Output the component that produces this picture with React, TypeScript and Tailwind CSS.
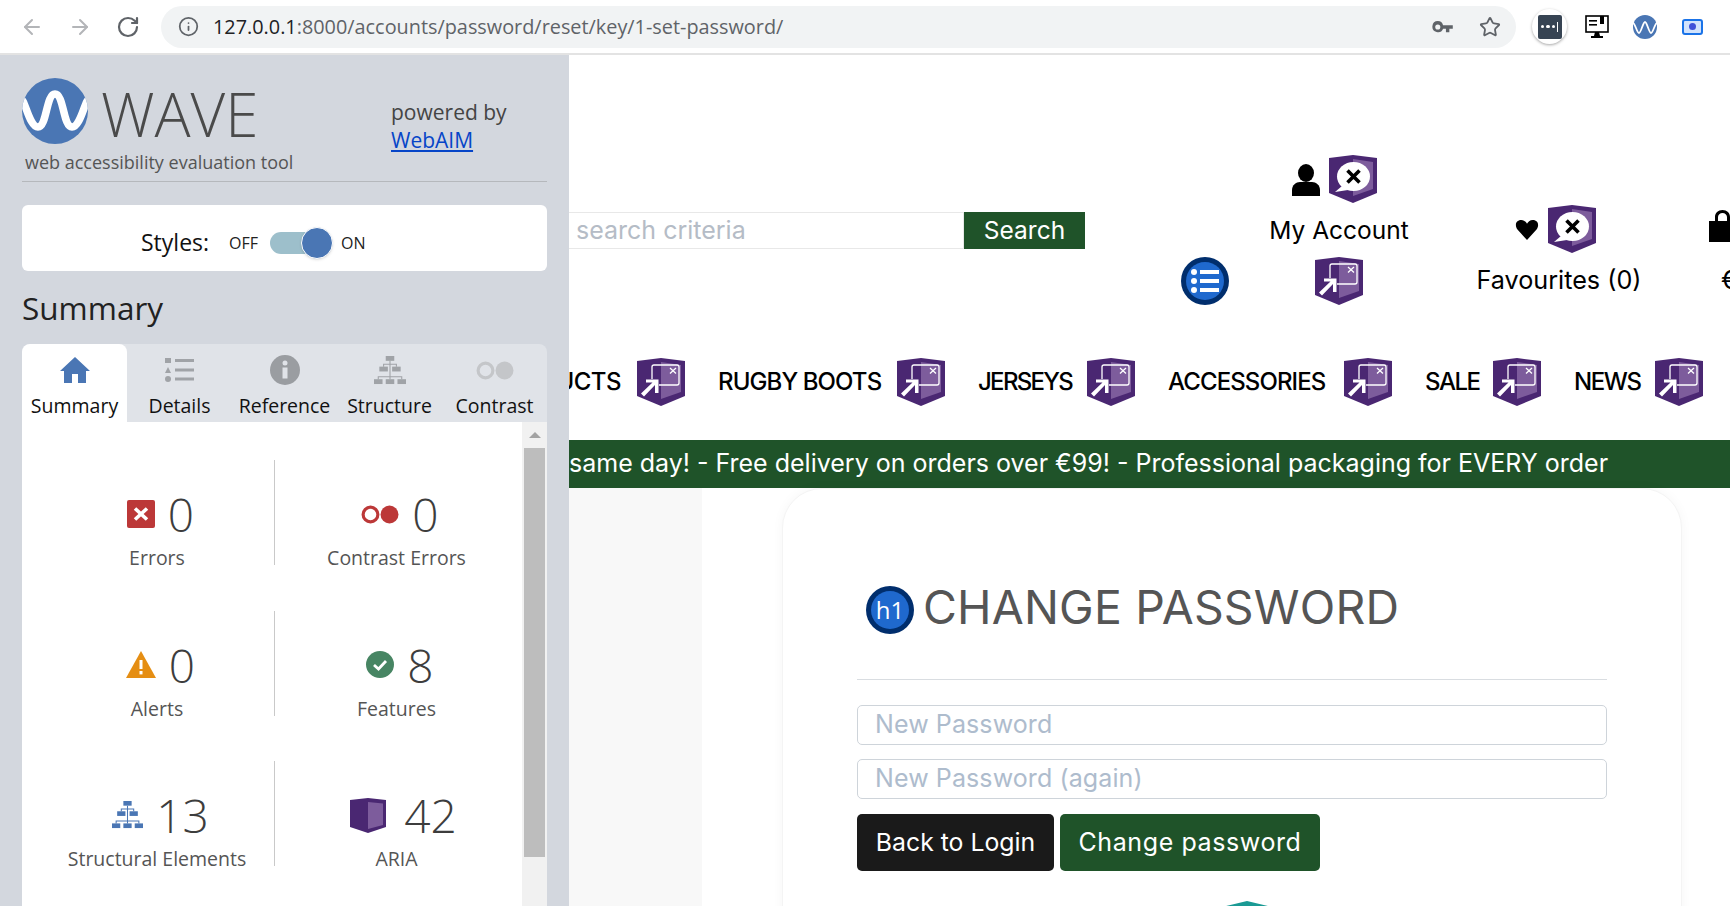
import { ArrowLeft, ArrowRight, Info, RotateCw, Star } from "lucide-react";
import type { ReactNode } from "react";

const poppins = { fontFamily: "Inter, 'Open Sans', sans-serif" };

const Shield = ({ children, className = "" }: { children?: ReactNode; className?: string }) => (
  <svg viewBox="0 0 48 48" className={`shrink-0 ${className}`}>
    <path d="M24 0 L48 3 V38 L24 48 L0 38 V3 Z" fill="#4a2772" />
    <path d="M24 4 L44 7 V34 L24 41 Z" fill="#7d5c9c" />
    {children}
  </svg>
);

const RegionIcon = ({ className = "" }: { className?: string }) => (
  <Shield className={className}>
    <path d="M15 21 V9 Q15 7 17 7 H40 Q42 7 42 9 V25 Q42 27 40 27 H22" fill="none" stroke="#fff" strokeWidth="1.3" />
    <path d="M33 10 L39 15.5 M39 10 L33 15.5" stroke="#fff" strokeWidth="1.3" />
    <path d="M9 21.5 H21.5 V35 H18 V27 L7 38.5 L4 35.5 L15.5 24.5 H9 Z" fill="#fff" />
  </Shield>
);

const LabelIcon = ({ className = "" }: { className?: string }) => (
  <Shield className={className}>
    <ellipse cx="24.5" cy="21.5" rx="16.5" ry="14.5" fill="#fff" />
    <path d="M13 31 L6 37 L19 35 Z" fill="#fff" />
    <path d="M18.5 15.5 L30.5 27.5 M30.5 15.5 L18.5 27.5" stroke="#000" strokeWidth="3.6" />
  </Shield>
);

const ListIcon = () => (
  <svg viewBox="0 0 48 48" className="w-[48px] h-[48px]">
    <circle cx="24" cy="24" r="24" fill="#002e6d" />
    <circle cx="24" cy="24" r="19" fill="#1f69ce" />
    <g fill="#fff">
      <circle cx="13" cy="15" r="3" />
      <circle cx="13" cy="24" r="3" />
      <circle cx="13" cy="33" r="3" />
      <rect x="19" y="13" width="19" height="4" />
      <rect x="19" y="22" width="19" height="4" />
      <rect x="19" y="31" width="19" height="4" />
    </g>
  </svg>
);

const SitemapIcon = ({ color, className = "" }: { color: string; className?: string }) => (
  <svg viewBox="0 0 30 30" className={className} fill={color} preserveAspectRatio="none">
    <rect x="11" y="0" width="8" height="5" />
    <rect x="5" y="11" width="8" height="5" />
    <rect x="17" y="11" width="8" height="5" />
    <rect x="0" y="24" width="8" height="5" />
    <rect x="11" y="24" width="8" height="5" />
    <rect x="22" y="24" width="8" height="5" />
    <path d="M14.5 5 V8 H8.5 V11 H9.5 V9 H14.5 V21 H3.5 V24 H4.5 V22 H14.5 V24 H15.5 V22 H25.5 V24 H26.5 V21 H15.5 V9 H20.5 V11 H21.5 V8 H15.5 V5 Z" />
  </svg>
);

const ContrastPair = ({ color, className = "" }: { color: string; className?: string }) => (
  <svg viewBox="0 0 36 18" className={className}>
    <circle cx="9" cy="9" r="7" fill="none" stroke={color} strokeWidth="3" />
    <circle cx="27" cy="9" r="8.5" fill={color} />
  </svg>
);

const tabs = [
  { label: "Summary", active: true },
  { label: "Details" },
  { label: "Reference" },
  { label: "Structure" },
  { label: "Contrast" },
];

const TabIcon = ({ label }: { label: string }) => {
  if (label === "Summary")
    return (
      <svg viewBox="0 0 30 26" className="w-[30px] h-[26px]">
        <path d="M15 0 L30 14 H26 V26 H18 V17 H12 V26 H4 V14 H0 Z" fill="#4a76b4" />
      </svg>
    );
  if (label === "Details")
    return (
      <svg viewBox="0 0 29 24" className="w-[29px] h-[24px]" fill="#a0a3a7">
        <rect x="0" y="0" width="6" height="5" />
        <path d="M3 9 L6 15 H0 Z" />
        <circle cx="3" cy="21" r="3" />
        <rect x="10" y="1" width="19" height="3" />
        <rect x="10" y="10.5" width="19" height="3" />
        <rect x="10" y="19.5" width="19" height="3" />
      </svg>
    );
  if (label === "Reference")
    return (
      <svg viewBox="0 0 30 30" className="w-[30px] h-[30px]">
        <circle cx="15" cy="15" r="15" fill="#9a9da1" />
        <circle cx="15" cy="8" r="2.5" fill="#e0e3e8" />
        <rect x="12.5" y="12.5" width="5" height="11" fill="#e0e3e8" />
      </svg>
    );
  if (label === "Structure") return <SitemapIcon color="#a0a3a7" className="w-[32px] h-[29px]" />;
  return <ContrastPair color="#c4c6c9" className="w-[38px] h-[19px]" />;
};

const Stat = ({ icon, value, label, divider, left }: { icon: ReactNode; value: string; label: string; divider?: boolean; left?: boolean }) => (
  <div className={`h-[105px] flex flex-col items-center pt-[25px] ${divider ? "border-r border-[#c9c9c9]" : ""} ${left ? "pl-[18px]" : "pr-[4px]"}`}>
    <div className="h-[58px] shrink-0 ml-[7px] flex items-center gap-[13px]">
      {icon}
      <span className="text-[46px] leading-none font-light text-[#3d3d3d]">{value}</span>
    </div>
    <div className="mt-[3px] shrink-0 text-[19.5px] leading-[24px] text-[#555] whitespace-nowrap">{label}</div>
  </div>
);

const Sidebar = () => (
  <aside className="w-[569px] h-full shrink-0 bg-[#d3d7de] px-[22px] overflow-hidden" style={{ fontFamily: "'Open Sans', sans-serif" }}>
    <div className="h-[127px] border-b border-[#b5b8bc] flex items-start">
      <div className="w-[369px] pt-[23px]">
        <div className="flex items-center h-[66px]">
          <svg viewBox="0 0 66 66" className="w-[66px] h-[66px]">
            <defs>
              <clipPath id="wave-clip">
                <circle cx="33" cy="33" r="33" />
              </clipPath>
            </defs>
            <circle cx="33" cy="33" r="33" fill="#4a76b4" />
            <path
              d="M-2 20 C3 20 7 49 16 49 C25 49 24 16 33 16 C42 16 41 49 50 49 C59 49 63 20 68 20"
              fill="none"
              stroke="#fff"
              strokeWidth="7.5"
              clipPath="url(#wave-clip)"
            />
          </svg>
          <span className="ml-[13px] mt-[6px] text-[60px] leading-none font-light text-[#4a4a4a]">WAVE</span>
        </div>
        <div className="ml-[3px] text-[18px] leading-[22px] mt-[7px] text-[#555] whitespace-nowrap">web accessibility evaluation tool</div>
      </div>
      <div className="pt-[43px] text-[21px] leading-[28px] text-[#444]">
        <div>powered by</div>
        <a className="text-[#0645c8] underline">WebAIM</a>
      </div>
    </div>

    <div className="mt-[23px] h-[66px] bg-white rounded-[6px] flex items-center pl-[119px] pt-[9px]">
      <span className="text-[23px] text-[#111]">Styles:</span>
      <span className="ml-[20px] text-[16px] text-[#222]">OFF</span>
      <div className="relative ml-[12px] w-[48px] h-[22px] rounded-full bg-[#9dbfcb]">
        <div className="absolute -top-[5px] -right-[15px] w-[32px] h-[32px] rounded-full bg-[#4a76b4] border border-white shadow" />
      </div>
      <span className="ml-[23px] text-[16px] text-[#222]">ON</span>
    </div>

    <h2 className="mt-[17px] text-[31.5px] leading-[40px] text-[#222]">Summary</h2>

    <div className="mt-[16px] w-[525px] bg-[#e0e3e8] rounded-t-[8px] flex h-[78px]">
      {tabs.map((t) => (
        <div
          key={t.label}
          className={`w-[105px] flex flex-col items-center ${t.active ? "bg-white rounded-t-[8px]" : ""}`}
        >
          <div className="h-[50px] pt-[2px] flex items-center justify-center"><TabIcon label={t.label} /></div>
          <div className="text-[19.5px] leading-[24px] text-[#111] whitespace-nowrap">{t.label}</div>
        </div>
      ))}
    </div>

    <div className="w-[525px] h-[485px] bg-white flex">
      <div className="flex-1 grid grid-cols-[253px_1fr] content-start pt-[38px] gap-y-[45.5px]">
        <Stat
          divider
          left
          value="0"
          label="Errors"
          icon={
            <svg viewBox="0 0 28 28" className="w-[28px] h-[28px]">
              <rect width="28" height="28" rx="2" fill="#bc3838" />
              <path d="M8 8.5 L20 19.5 M20 8.5 L8 19.5" stroke="#fff" strokeWidth="3.6" />
            </svg>
          }
        />
        <Stat value="0" label="Contrast Errors" icon={<ContrastPair color="#bc3838" className="w-[38px] h-[19px]" />} />
        <Stat
          divider
          left
          value="0"
          label="Alerts"
          icon={
            <svg viewBox="0 0 30 27" className="w-[30px] h-[27px]">
              <path d="M15 0 L30 27 H0 Z" fill="#e58e13" />
              <rect x="13.5" y="9" width="3" height="9" fill="#fff" />
              <rect x="13.5" y="20" width="3" height="3.4" fill="#fff" />
            </svg>
          }
        />
        <Stat
          value="8"
          label="Features"
          icon={
            <svg viewBox="0 0 28 27" className="w-[28px] h-[27px]">
              <ellipse cx="14" cy="13.5" rx="14" ry="13.5" fill="#478563" />
              <path d="M8 14 L12.5 18 L20 10" fill="none" stroke="#fff" strokeWidth="2.8" />
            </svg>
          }
        />
        <Stat divider left value="13" label="Structural Elements" icon={<SitemapIcon color="#4a76b4" className="w-[31px] h-[28px]" />} />
        <Stat
          value="42"
          label="ARIA"
          icon={
            <svg viewBox="0 0 36 35" className="w-[36px] h-[35px] ml-[7px] mr-[5px]">
              <path d="M18 0 L36 2 V29 L18 35 L0 29 V2 Z" fill="#4a2772" />
              <path d="M18 4 L33 5.5 V27 L18 31 Z" fill="#7d5c9c" />
            </svg>
          }
        />
      </div>
      <div className="w-[25px] bg-[#f1f1f1] flex flex-col items-center">
        <div className="h-[26px] flex items-center justify-center">
          <div className="w-0 h-0 border-l-[6px] border-r-[6px] border-b-[6px] border-l-transparent border-r-transparent border-b-[#a3a3a3]" />
        </div>
        <div className="w-[21px] h-[409px] bg-[#bdbdbd]" />
      </div>
    </div>
  </aside>
);

const navItems = [
  { label: "RUGBY BOOTS", width: "w-[164px]", tracking: "tracking-[-0.9px]" },
  { label: "JERSEYS", width: "w-[94px]", tracking: "tracking-[-1.7px]" },
  { label: "ACCESSORIES", width: "w-[161px]", tracking: "tracking-[-0.9px]" },
  { label: "SALE", width: "w-[53px]", tracking: "tracking-[-1.5px]" },
  { label: "NEWS", width: "w-[66px]", tracking: "tracking-[-1.4px]" },
];

const Page = () => (
  <main className="flex-1 min-w-0 h-full overflow-hidden bg-white" style={poppins}>
    {/* header */}
    <div className="h-[285px] flex items-start">
      <div className="mt-[157px] w-[516px] flex shrink-0">
        <div className="w-[395px] h-[37px] border border-[#e8e8e8] border-l-0 pl-[7px] flex items-center text-[25px] text-[#b5bcc6]">
          search criteria
        </div>
        <div className="w-[121px] h-[37px] bg-[#1f5329] text-white text-[24.5px] flex items-center justify-center">Search</div>
      </div>
      <div className="w-[140px] ml-[184px] flex flex-col items-center mt-[100px] shrink-0">
        <div className="flex items-center gap-[9px] -ml-[9px]">
          <svg viewBox="0 0 28 32" className="w-[28px] h-[32px] mt-[2px]" fill="#000">
            <ellipse cx="14" cy="9" rx="8" ry="9" />
            <path d="M0 32 V26 C0 21 4 18 8 18 H20 C24 18 28 21 28 26 V32 Z" />
          </svg>
          <LabelIcon className="w-[48px] h-[48px]" />
        </div>
        <div className="mt-[9px] text-[24.5px] leading-[36px] text-black whitespace-nowrap">My Account</div>
      </div>
      <div className="w-[168px] ml-[66px] flex flex-col items-center mt-[150px] shrink-0">
        <div className="flex items-center gap-[9px] -ml-[8px]">
          <svg viewBox="0 0 24 22" className="w-[24px] h-[21px]" fill="#000">
            <path d="M12 22 L2 11 C-1 7 0 1 6 1 C9 1 11 3 12 5 C13 3 15 1 18 1 C24 1 25 7 22 11 Z" />
          </svg>
          <LabelIcon className="w-[48px] h-[48px]" />
        </div>
        <div className="mt-[9px] text-[25.2px] leading-[36px] text-black whitespace-nowrap">Favourites (0)</div>
      </div>
      <div className="ml-[66px] mt-[155px] flex flex-col w-[28px] shrink-0">
        <svg viewBox="0 0 27 32" className="w-[27px] h-[32px] shrink-0" fill="#000">
          <path d="M0 11 H6 V7 C6 3 9 0 13.5 0 C18 0 21 3 21 7 V11 H27 V32 H0 Z M9 11 H18 V7 C18 5 16 3 13.5 3 C11 3 9 5 9 7 Z" fillRule="evenodd" />
        </svg>
        <div className="mt-[20px] ml-[12px] text-[25px] leading-[36px] text-black">€</div>
      </div>
    </div>

    {/* list + landmark markers below the account row */}
    <div className="h-0 relative">
      <div className="absolute left-[612px] -top-[83px]"><ListIcon /></div>
      <div className="absolute left-[746px] -top-[83px]"><RegionIcon className="w-[48px] h-[48px]" /></div>
    </div>

    {/* nav */}
    <nav className="h-[100px] pb-[16px] flex items-center overflow-hidden">
      <div className="w-[52px] overflow-hidden whitespace-nowrap shrink-0 text-[24px] font-medium text-black tracking-[-0.5px] flex justify-end">UCTS</div>
      <RegionIcon className="w-[48px] h-[48px] ml-[16px] mr-[33px]" />
      {navItems.map((n) => (
        <div key={n.label} className="flex items-center mr-[33px] shrink-0">
          <span className={`${n.width} ${n.tracking} text-[24px] font-medium text-black whitespace-nowrap`}>{n.label}</span>
          <RegionIcon className="w-[48px] h-[48px] ml-[15px]" />
        </div>
      ))}
    </nav>

    {/* promo banner */}
    <div className="h-[48px] bg-[#1f5329] text-white text-[25px] flex items-center whitespace-nowrap overflow-hidden">
      same day! - Free delivery on orders over €99! - Professional packaging for EVERY order
    </div>

    {/* content */}
    <div className="flex h-[418px]">
      <div className="w-[133px] bg-[#f8f8f8] shrink-0" />
      <div className="ml-[80px] w-[900px] h-[450px] rounded-t-[40px] bg-white border border-[#f4f4f4] shadow-[0_0_12px_rgba(0,0,0,0.04)] px-[74px] pt-[89px] shrink-0">
        <div className="flex items-center pl-[9px] h-[60px]">
          <div className="relative w-[48px] h-[48px] shrink-0 mt-[4px]">
            <svg viewBox="0 0 48 48" className="w-[48px] h-[48px]">
              <circle cx="24" cy="24" r="24" fill="#002e6d" />
              <circle cx="24" cy="24" r="19" fill="#1f69ce" />
            </svg>
            <span className="absolute inset-0 flex items-center justify-center text-white text-[24px]" style={{ fontFamily: "'Open Sans', sans-serif" }}>h1</span>
          </div>
          <h1 className="ml-[9px] text-[46.4px] text-[#555] whitespace-nowrap tracking-[0.2px]">CHANGE PASSWORD</h1>
        </div>
        <div className="mt-[41px] border-t border-[#d9dde1]" />
        <div className="mt-[25px] h-[40px] border border-[#ced4da] rounded-[5px] pl-[17px] flex items-center text-[25px] tracking-[0.1px] text-[#aebccd]">New Password</div>
        <div className="mt-[14px] h-[40px] border border-[#ced4da] rounded-[5px] pl-[17px] flex items-center text-[25px] tracking-[0.1px] text-[#aebccd]">New Password (again)</div>
        <div className="mt-[15px] flex gap-[6px]">
          <div className="w-[197px] h-[57px] rounded-[5px] bg-[#1a1a1a] text-white text-[24.8px] flex items-center justify-center">Back to Login</div>
          <div className="w-[260px] h-[57px] rounded-[5px] bg-[#1f5329] text-white text-[25px] tracking-[0.6px] flex items-center justify-center">Change password</div>
        </div>
        <div className="mt-[30px] ml-[365px] w-[50px] h-[6px] bg-[#1a9a94] [clip-path:polygon(50%_0,100%_100%,0_100%)]" />
      </div>
    </div>
  </main>
);

const App = () => (
  <div className="w-[1730px] h-[906px] overflow-hidden flex flex-col bg-white">
    {/* browser toolbar */}
    <div className="h-[55px] shrink-0 border-b-2 border-[#e3e3e3] flex items-center pl-[20px]" style={{ fontFamily: "'Open Sans', sans-serif" }}>
      <ArrowLeft className="w-[24px] h-[24px] text-[#b3b5b8]" strokeWidth={2} />
      <ArrowRight className="w-[24px] h-[24px] text-[#b3b5b8] ml-[24px]" strokeWidth={2} />
      <RotateCw className="w-[24px] h-[24px] text-[#5f6368] ml-[24px]" strokeWidth={2.2} />
      <div className="ml-[21px] w-[1355px] h-[42px] rounded-full bg-[#f1f3f4] flex items-center pl-[17px] pr-[15px] shrink-0">
        <Info className="w-[21px] h-[21px] text-[#5f6368]" strokeWidth={2} />
        <span className="ml-[14px] mt-[1px] text-[19.85px] text-[#5f6368] whitespace-nowrap"><span className="text-[#202124]">127.0.0.1</span>:8000/accounts/password/reset/key/1-set-password/</span>
        <svg viewBox="0 0 24 14" className="ml-auto w-[21px] h-[12px]" fill="#5f6368">
          <path d="M6.5 0 A6.5 6.5 0 1 0 12.7 9 H16 V13 H20 V9 H24 V5 H12.7 A6.5 6.5 0 0 0 6.5 0 Z M6.5 4 A3 3 0 1 1 6.5 10 A3 3 0 1 1 6.5 4 Z" fillRule="evenodd" />
        </svg>
        <Star className="ml-[26px] w-[22px] h-[22px] text-[#5f6368]" strokeWidth={2} />
      </div>
      <div className="ml-[16px] w-[35px] h-[35px] rounded-full bg-white shadow-[0_1px_3px_rgba(0,0,0,0.35)] flex items-center justify-center shrink-0">
        <div className="w-[24px] h-[24px] rounded-[2px] bg-[#374453] flex items-center justify-center gap-[2px]">
          <span className="w-[3.5px] h-[3.5px] rounded-full bg-white" />
          <span className="w-[3.5px] h-[3.5px] rounded-full bg-white" />
          <span className="w-[3.5px] h-[3.5px] rounded-full bg-white" />
          <span className="w-[1px] h-[10px] bg-white" />
        </div>
      </div>
      <svg viewBox="0 0 24 24" className="ml-[18px] w-[24px] h-[24px] shrink-0">
        <rect x="1" y="1" width="22" height="16" fill="#fff" stroke="#000" strokeWidth="1.6" />
        <rect x="4" y="5" width="8" height="1.6" fill="#000" />
        <rect x="4" y="9" width="8" height="1.6" fill="#000" />
        <rect x="15" y="1" width="4" height="8" fill="#000" />
        <path d="M10 17 H14 L15 21 H18 V23 H6 V21 H9 Z" fill="#000" />
      </svg>
      <svg viewBox="0 0 24 24" className="ml-[24px] w-[24px] h-[24px] shrink-0">
        <circle cx="12" cy="12" r="12" fill="#4a76b4" />
        <path d="M0 8 C2 8 4 18 6 18 C8 18 10 7 12 7 C14 7 16 18 18 18 C20 18 22 8 24 8" fill="none" stroke="#fff" strokeWidth="1.8" />
      </svg>
      <div className="ml-[25px] w-[21px] h-[16px] rounded-[3px] border-2 border-[#1a73e8] bg-[#d2e3fc] flex items-center justify-center shrink-0">
        <span className="w-[7px] h-[7px] rounded-full bg-[#3f51d8]" />
      </div>
    </div>

    <div className="flex-1 min-h-0 flex">
      <Sidebar />
      <Page />
    </div>
  </div>
);

export default App;
